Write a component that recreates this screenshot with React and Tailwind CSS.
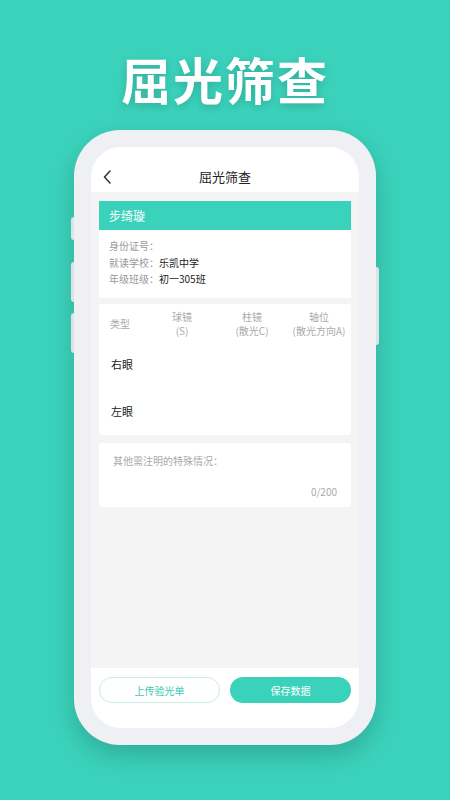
import React from 'react';

const font = { fontFamily: '"Noto Sans CJK SC", "Noto Sans", sans-serif' };

const App = () => {
  return (
    <div className="w-[450px] h-[800px] overflow-hidden bg-[#3bd2bb] flex flex-col items-center" style={font}>
      <h1 className="mt-[50px] text-[50px] leading-[56px] font-bold text-white tracking-[2px] [text-shadow:0_3px_8px_rgba(0,0,0,0.18)]">
        屈光筛查
      </h1>

      <div className="relative mt-[24px] w-[302px] h-[615px] rounded-[46px] bg-[#eef0f4] p-[17px] shadow-[0_10px_24px_rgba(0,0,0,0.18)]">
        {/* side buttons */}
        <div className="absolute left-[-3px] top-[87px] w-[3px] h-[23px] rounded-l bg-[#dfe3e8]" />
        <div className="absolute left-[-3px] top-[132px] w-[3px] h-[40px] rounded-l bg-[#dfe3e8]" />
        <div className="absolute left-[-3px] top-[183px] w-[3px] h-[40px] rounded-l bg-[#dfe3e8]" />
        <div className="absolute right-[-3px] top-[137px] w-[3px] h-[78px] rounded-r bg-[#dfe3e8]" />

        <div className="w-full h-full rounded-[30px] overflow-hidden bg-[#f4f4f5] flex flex-col">
          {/* nav */}
          <div className="relative h-[45px] bg-white flex items-center justify-center shrink-0">
            <svg className="absolute left-[12px] top-[23px]" width="9" height="14" viewBox="0 0 9 14" fill="none">
              <path d="M7 1L1.5 7L7 13" stroke="#333" strokeWidth="1.5" strokeLinecap="round" strokeLinejoin="round" />
            </svg>
            <span className="mt-[14px] text-[13px] text-[#222]">屈光筛查</span>
          </div>

          <div className="flex-1 flex flex-col px-[8px] pt-[9px]">
            <div className="h-[29px] bg-[#3bd2bb] flex items-center pl-[10px] text-[12px] text-white">步绮璇</div>
            <div className="bg-white px-[10px] pt-[8px] pb-[10px] text-[10px] leading-[16.5px]">
              <div className="text-[#999]">身份证号：</div>
              <div className="text-[#999]">
                就读学校：<span className="text-[#222]">乐凯中学</span>
              </div>
              <div className="text-[#999]">
                年级班级：<span className="text-[#222]">初一305班</span>
              </div>
            </div>

            <div className="mt-[6px] bg-white rounded-[3px] h-[131px] pt-[6px]">
              <div className="grid grid-cols-[48px_70px_70px_64px] text-[10px] leading-[14px] text-[#aaa] text-center">
                <div className="flex items-center pl-[11px]">类型</div>
                <div>
                  球镜
                  <br />
                  (S)
                </div>
                <div>
                  柱镜
                  <br />
                  (散光C)
                </div>
                <div>
                  轴位
                  <br />
                  (散光方向A)
                </div>
              </div>
              <div className="pl-[12px] text-[11px] text-[#222]">
                <div className="mt-[18px] leading-[16px]">右眼</div>
                <div className="mt-[31px] leading-[16px]">左眼</div>
              </div>
            </div>

            <div className="mt-[8px] bg-white rounded-[3px] h-[64px] px-[14px] pt-[11px] flex flex-col">
              <div className="text-[10px] leading-[14px] text-[#aaa]">其他需注明的特殊情况：</div>
              <div className="mt-[17px] text-right text-[10px] leading-[14px] text-[#aaa]">0/200</div>
            </div>
          </div>

          {/* bottom actions */}
          <div className="h-[60px] bg-white flex gap-[10px] px-[8px] pt-[9px] shrink-0">
            <button className="w-[121px] h-[26px] rounded-full border border-[#cde9e4] text-[10px] text-[#3bc9b3] bg-white">
              上传验光单
            </button>
            <button className="w-[121px] h-[26px] rounded-full bg-[#3bd2bb] text-[10px] text-white">保存数据</button>
          </div>
        </div>
      </div>
    </div>
  );
};

export default App;
